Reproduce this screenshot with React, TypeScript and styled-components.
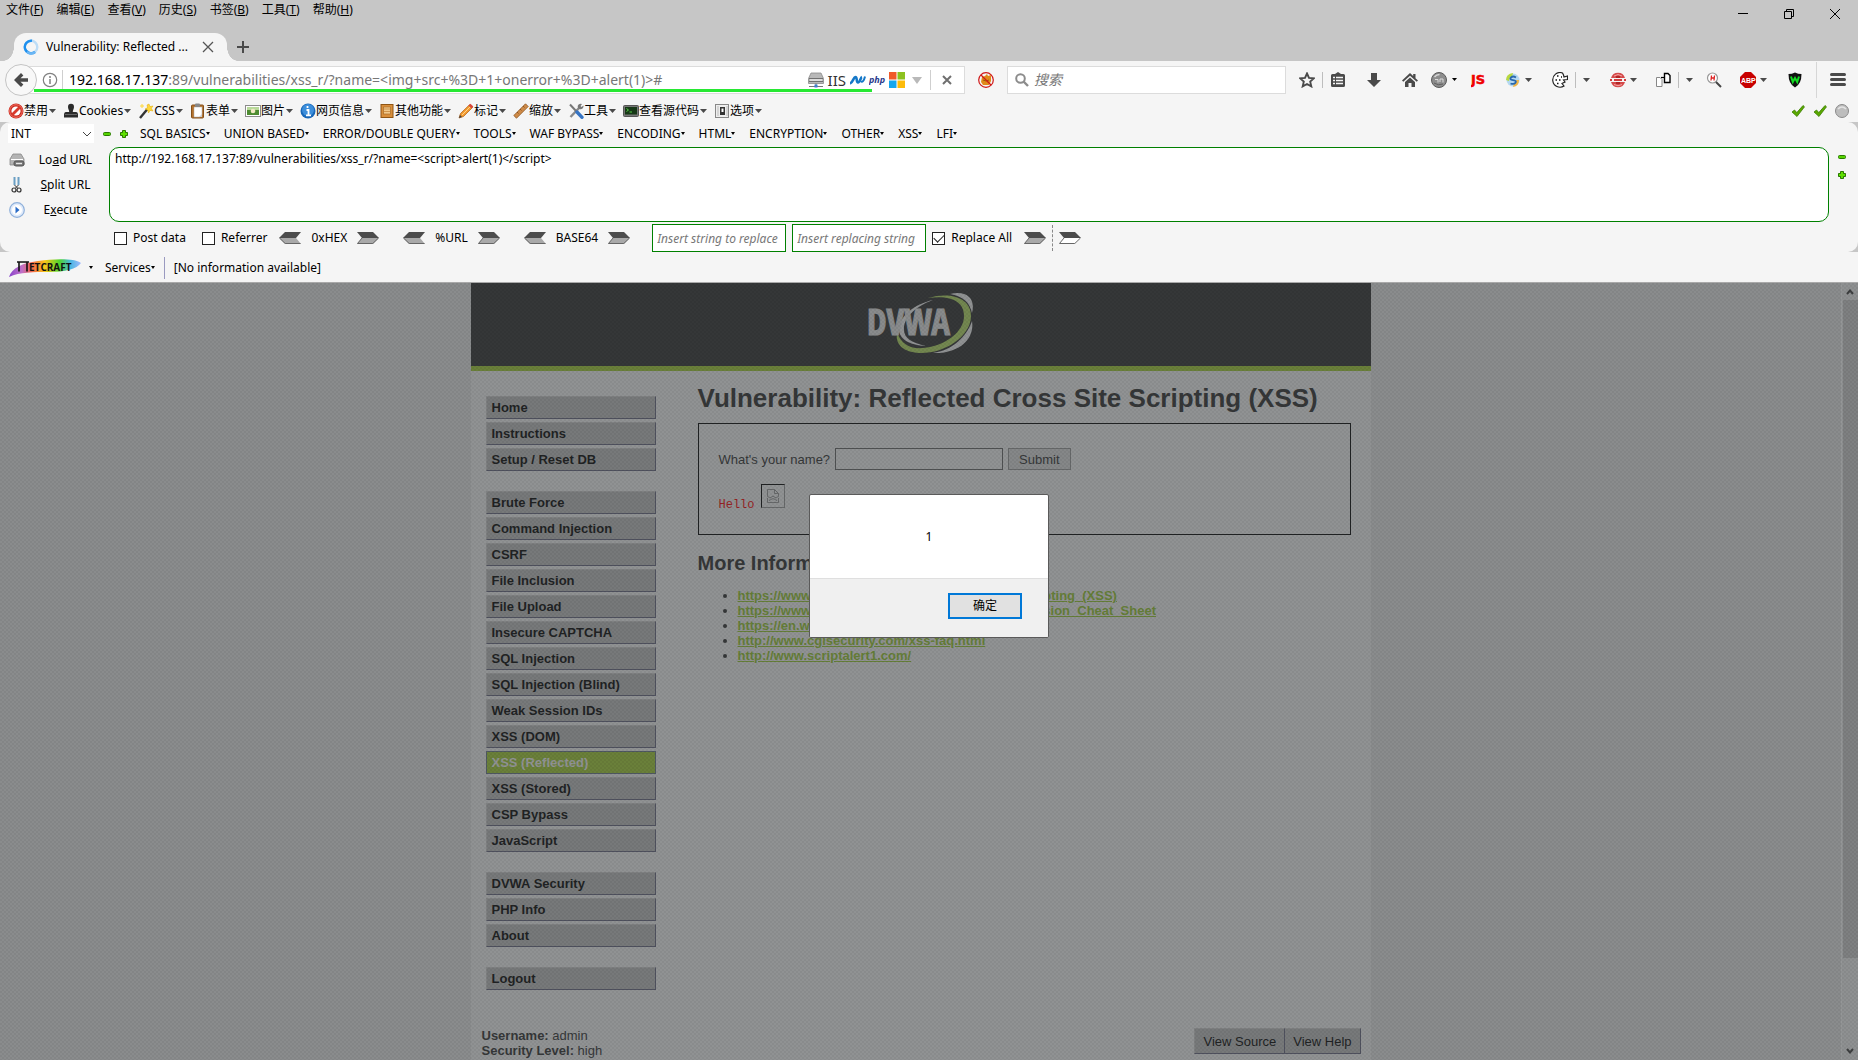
import React from 'react';
import styled, { createGlobalStyle, css } from 'styled-components';

const ui = `"Noto Sans", "Open Sans", "Noto Sans CJK SC", sans-serif`;
const page = `"Liberation Sans", Arial, "Noto Sans CJK SC", sans-serif`;

const Global = createGlobalStyle`
  * { box-sizing: border-box; }
  html, body { margin: 0; padding: 0; }
  body { font-family: ${ui}; font-size: 12px; line-height: 16px; color: #000; overflow: hidden; }
  button, input, select, textarea { font: inherit; color: inherit; margin: 0; padding: 0; border: 0; background: none; }
  svg { display: block; flex: none; }
`;

const Window = styled.div`
  display: flex;
  flex-direction: column;
  height: 100vh;
  background: #c6c6c6;
`;

/* ---------- title bar ---------- */

const TitleBar = styled.header`
  display: flex;
  justify-content: space-between;
  height: 33px;
`;
const MenuBar = styled.nav`
  display: flex;
  align-items: flex-start;
  gap: 1px;
  padding-top: 2px;
`;
const MenuItem = styled.button`
  padding: 0 6px;
  white-space: nowrap;
`;
const WindowControls = styled.div`
  display: flex;
`;
const WindowButton = styled.button`
  display: flex;
  width: 46px;
  height: 28px;
  align-items: center;
  justify-content: center;
`;

const TabStrip = styled.div`
  display: flex;
  height: 28px;
  padding-left: 14px;
`;
const Tab = styled.div`
  position: relative;
  display: flex;
  align-items: center;
  width: 213px;
  padding: 0 13px 0 9px;
  gap: 7px;
  background: #f5f5f5;
  border-radius: 12px 12px 0 0;
  &::before, &::after {
    content: "";
    position: absolute;
    bottom: 0;
    width: 11px;
    height: 14px;
  }
  &::before { left: -11px; background: radial-gradient(ellipse 11px 14px at 0 0, transparent 97%, #f5f5f5 100%); }
  &::after { right: -11px; background: radial-gradient(ellipse 11px 14px at 100% 0, transparent 97%, #f5f5f5 100%); }
`;
const TabTitle = styled.span`
  flex: 1;
  white-space: nowrap;
`;
const IconButton = styled.button`
  display: flex;
  align-items: center;
  justify-content: center;
  flex: none;
`;
const NewTab = styled(IconButton)`
  width: 32px;
`;

/* ---------- navigation toolbar ---------- */

const NavBar = styled.div`
  display: flex;
  align-items: center;
  height: 38px;
  padding: 0 12px 0 5px;
  background: #f5f5f5;
`;
const BackButton = styled(IconButton)`
  position: relative;
  z-index: 1;
  width: 32px;
  height: 32px;
  margin-right: -16px;
  border: 1px solid #c4c4c4;
  border-radius: 50%;
  background: #f8f8f8;
`;
const UrlBox = styled.div`
  position: relative;
  display: flex;
  align-items: center;
  flex: 1;
  height: 28px;
  padding: 0 12px 0 20px;
  border: 1px solid #dcdcdc;
  background: #fff;
  font-size: 14px;
  line-height: 20px;
`;
const LoadProgress = styled.div`
  position: absolute;
  left: 12px;
  bottom: 1px;
  width: 89%;
  height: 3px;
  background: #27e833;
`;
const Divider = styled.span<{ $h: number; $tone?: string }>`
  flex: none;
  width: 1px;
  height: ${p => p.$h}px;
  background: ${p => p.$tone || '#cfcfcf'};
`;
const HostLabel = styled.label`
  margin-left: 6px;
`;
const UrlInput = styled.input`
  flex: 1;
  min-width: 0;
  color: #777;
  outline: none;
`;
const UrlTools = styled.div`
  display: flex;
  align-items: center;
  gap: 3px;
`;
const ServerName = styled.span`
  padding: 0 1px;
  font-size: 15px;
  color: #333;
`;
const UrlTail = styled.div`
  display: flex;
  align-items: center;
  gap: 8px;
  padding-left: 4px;
`;
const BlockedButton = styled(IconButton)`
  width: 42px;
`;
const SearchBox = styled.label`
  display: flex;
  align-items: center;
  gap: 5px;
  width: 279px;
  height: 28px;
  padding: 0 7px;
  border: 1px solid #dcdcdc;
  background: #fff;
  font-size: 14px;
`;
const SearchInput = styled.input`
  flex: 1;
  min-width: 0;
  &::placeholder { color: #777; font-style: italic; opacity: 1; }
`;
const Tools = styled.div`
  display: flex;
  align-items: center;
  padding-left: 13px;
`;
const Tool = styled.div<{ $before: number }>`
  display: flex;
  align-items: center;
  margin-left: ${p => p.$before}px;
`;

/* ---------- developer toolbar ---------- */

const DevBar = styled.div`
  display: flex;
  align-items: center;
  height: 23px;
  padding: 0 9px 0 8px;
  gap: 7px;
  background: #f5f5f5;
`;
const DevButton = styled.button`
  display: flex;
  align-items: center;
  white-space: nowrap;
  line-height: 20px;
  & > svg:last-child { margin-left: 1px; }
`;
const DevStatus = styled.div`
  display: flex;
  gap: 8px;
  margin-left: auto;
`;

/* ---------- hackbar ---------- */

const HackBar = styled.section`
  display: flex;
  flex-direction: column;
  height: 130px;
  border-radius: 10px;
  background: #f5f5f5;
`;
const HackMenu = styled.div`
  display: flex;
  align-items: center;
  height: 23px;
  margin-bottom: 2px;
  padding-left: 8px;
  gap: 12px;
`;
const HackMenuList = styled.div`
  display: flex;
  align-items: center;
  gap: 14px;
`;
const HackSelectBox = styled.div`
  display: grid;
  align-items: center;
  width: 86px;
  height: 19px;
  margin-right: -3px;
  background: #fff;
  & > * { grid-area: 1 / 1; }
  & > svg { justify-self: end; margin-right: 2px; pointer-events: none; }
`;
const HackSelect = styled.select`
  width: 100%;
  padding-left: 3px;
  appearance: none;
`;
const HackMenuButton = styled.button`
  display: flex;
  align-items: center;
  white-space: nowrap;
`;
const PlusMinus = styled.div`
  display: flex;
  gap: 9px;
`;
const HackBody = styled.div`
  display: flex;
  height: 75px;
`;
const HackActions = styled.div`
  display: flex;
  flex-direction: column;
  width: 109px;
  padding: 0 3px 0 9px;
`;
const HackAction = styled.button`
  display: flex;
  align-items: center;
  flex: 1;
  & > span { flex: 1; text-align: center; }
`;
const HackText = styled.textarea`
  flex: 1;
  padding: 3px 5px;
  border: 1px solid #008000;
  border-radius: 10px;
  background: #fff;
  resize: none;
  outline: none;
`;
const HackSide = styled.div`
  display: flex;
  flex-direction: column;
  align-items: center;
  width: 29px;
  padding: 6px 3px 0 0;
  gap: 10px;
`;
const HackOptions = styled.div`
  display: flex;
  align-items: center;
  height: 30px;
  padding: 2px 0 0 114px;
`;
const Check = styled.label<{ $gap: number }>`
  display: flex;
  align-items: center;
  gap: 6px;
  margin-right: ${p => p.$gap}px;
  white-space: nowrap;
`;
const CheckInput = styled.input`
  appearance: none;
  display: grid;
  place-items: center;
  width: 13px;
  height: 13px;
  border: 1px solid #222;
  background: #fff;
  &:checked::before {
    content: "";
    width: 9px;
    height: 5px;
    margin-top: -3px;
    border: solid #222;
    border-width: 0 0 1px 1px;
    transform: rotate(-45deg);
  }
`;
const Codecs = styled.div`
  display: flex;
  gap: 24px;
  margin-right: 22px;
`;
const Codec = styled.div`
  display: flex;
  align-items: center;
  gap: 10px;
`;
const ReplaceInput = styled.input`
  width: 134px;
  height: 28px;
  margin-right: 6px;
  padding: 0 4px;
  border: 1px solid #008000;
  background: #fff;
  &::placeholder { color: #777; font-style: italic; opacity: 1; }
`;
const ReplaceRun = styled.div`
  display: flex;
  align-items: center;
  gap: 6px;
`;
const Dashed = styled.span`
  width: 1px;
  height: 26px;
  border-left: 1px dashed #888;
`;

/* ---------- netcraft ---------- */

const NetcraftBar = styled.div`
  display: flex;
  align-items: center;
  height: 31px;
  padding: 1px 0 0 8px;
  gap: 9px;
  border-bottom: 1px solid #a9a9a9;
  background: #f5f5f5;
`;
const NetcraftButton = styled(HackMenuButton)`
  gap: 5px;
`;
const Services = styled(HackMenuButton)`
  margin-left: 3px;
`;

/* ---------- web page ---------- */

const Viewport = styled.div`
  position: relative;
  display: flex;
  flex: 1;
  min-height: 0;
  overflow: hidden;
`;
const Page = styled.div`
  flex: 1;
  background: #e7e7e7;
  font-family: ${page};
  font-size: 13px;
  line-height: 15px;
  color: #2f2f2f;
`;
const Container = styled.div`
  width: 900px;
  min-height: 100%;
  margin: 0 auto;
  background: #f4f4f4;
`;
const PageHeader = styled.div`
  display: flex;
  justify-content: center;
  height: 88px;
  padding: 8px 0 0;
  border-bottom: 5px solid #a1cc33;
  background: #2f2f2f;
`;
const Columns = styled.div`
  display: grid;
  grid-template-columns: 170px 1fr;
  gap: 42px;
  padding: 0 20px 0 15px;
`;
const SideNav = styled.nav`
  padding-top: 25px;
`;
const NavGroup = styled.ul`
  display: grid;
  gap: 3px;
  margin: 0 0 20px;
  padding: 0;
  list-style: none;
`;
const NavLink = styled.a<{ $active?: boolean }>`
  display: block;
  height: 23px;
  padding: 3px 5px;
  border: 1px solid #d0d0d0;
  border-right-color: #666680;
  border-bottom-color: #666680;
  background: #bebebe;
  color: #000;
  font-weight: bold;
  text-decoration: none;
  ${p => p.$active && css`
    border-color: #667788;
    background: #a1cc33;
    color: #f4f4f4;
  `}
`;
const Main = styled.main`
  padding-top: 12px;
`;
const Title = styled.h1`
  margin: 0 0 10px;
  font-size: 26px;
  line-height: 30px;
  white-space: nowrap;
`;
const Vulnerable = styled.div`
  padding: 24px 20px 26px;
  border: 1px solid #000;
`;
const NameForm = styled.form`
  display: flex;
  align-items: center;
  gap: 5px;
`;
const NameInput = styled.input`
  width: 168px;
  height: 22px;
  border: 1px solid #666;
  background: #f4f4f4;
`;
const Submit = styled.button`
  height: 22px;
  padding: 0 10px;
  border: 1px solid #999;
  background: #dcdcdc;
`;
const Greeting = styled.div`
  display: flex;
  gap: 6px;
  margin-top: 14px;
  color: #f00;
  font-family: "Liberation Mono", monospace;
  font-size: 12px;
  line-height: 42px;
  height: 24px;
`;
const BrokenImage = styled.span`
  display: grid;
  place-items: center;
  width: 24px;
  height: 24px;
  border: 1px solid #999;
  border-top-color: #000;
  border-left-color: #000;
`;
const Subtitle = styled.h2`
  margin: 16px 0 13px;
  font-size: 20px;
  line-height: 24px;
`;
const Links = styled.ul`
  margin: 0;
  padding: 0 0 0 40px;
`;
const MoreLink = styled.a`
  color: #96c82e;
  font-weight: bold;
`;
const Footer = styled.div`
  display: flex;
  justify-content: space-between;
  padding: 18px 10px 0 11px;
`;
const SourceButtons = styled.div`
  display: flex;
`;
const SourceButton = styled.button`
  height: 26px;
  padding: 0 8px;
  border: 1px solid #d0d0d0;
  border-right-color: #666680;
  border-bottom-color: #666680;
  background: #bebebe;
  color: #000;
  & + & { border-left-width: 0; }
`;

const Scrollbar = styled.div`
  display: flex;
  flex-direction: column;
  align-items: center;
  width: 17px;
  padding: 6px 0;
  border-left: 1px solid #fff;
  background: #f0f0f0;
`;
const Thumb = styled.div`
  width: 15px;
  margin: 5px 0 auto;
  height: 86%;
  background: #cdcdcd;
`;

const Shade = styled.div`
  position: absolute;
  inset: 0;
  display: flex;
  justify-content: center;
  align-items: flex-start;
  padding-top: 211px;
  background:
    radial-gradient(circle at 1px 1px, rgba(0, 0, 0, 0.05) 1px, transparent 1px) 0 0 / 4px 4px,
    radial-gradient(circle at 1px 1px, rgba(0, 0, 0, 0.05) 1px, transparent 1px) 2px 2px / 4px 4px,
    rgba(60, 63, 64, 0.54);
`;
const Dialog = styled.div`
  width: 240px;
  border: 1px solid #5a5a5a;
  border-radius: 2px;
  background: #fff;
  overflow: hidden;
`;
const DialogText = styled.p`
  margin: 0;
  padding: 34px 0 33px;
  text-align: center;
`;
const DialogActions = styled.div`
  display: flex;
  justify-content: flex-end;
  padding: 14px 26px 18px;
  border-top: 1px solid #dfdfdf;
  background: #f0f0f0;
`;
const OkButton = styled.button`
  width: 74px;
  height: 26px;
  border: 2px solid #0078d7;
  background: #e1e1e1;
`;

/* ---------- drawings ---------- */

const Icon = ({ children, w = 16, h = 16 }: { children: React.ReactNode; w?: number; h?: number }) => (
  <svg width={w} height={h} viewBox={`0 0 ${w} ${h}`} fill="none" aria-hidden="true">{children}</svg>
);

const Caret = () => <Icon w={7} h={4}><path d="M0 0h7L3.500 4z" fill="#4a4a4a" /></Icon>;
const SmallCaret = () => <Icon w={4} h={3}><path d="M0 0h4L2 3z" fill="#000" /></Icon>;

const Minus = () => <Icon w={8} h={8}><rect x=".5" y="2.500" width="7" height="3" rx="1" fill="#55d400" stroke="#2a7a00" /></Icon>;
const Plus = () => (
  <Icon w={8} h={8}>
    <path d="M2.500.5h3v2h2v3h-2v2h-3v-2h-2v-3h2z" fill="#2a7a00" stroke="#2a7a00" strokeLinejoin="round" />
    <path d="M4 1v6M1 4h6" stroke="#5fe000" strokeWidth="2" />
  </Icon>
);

const ArrowRight = ({ hollow }: { hollow?: boolean }) => (
  <Icon w={22} h={12}>
    <path d="M0 0h16l6 6H5z" fill="#4c4c4c" />
    <path d="M5 6h17l-6 6H0z" fill={hollow ? '#fff' : '#a9a9a9'} />
    <path d="M5 6L.5 11.500h15.300L21.500 6" stroke="#666" />
  </Icon>
);
const ArrowLeft = () => (
  <Icon w={22} h={12}>
    <path d="M22 0H6L0 6h17z" fill="#4c4c4c" />
    <path d="M17 6H0l6 6h16z" fill="#a9a9a9" />
    <path d="M21.500 11.500H6.200L.5 6" stroke="#666" />
  </Icon>
);

const CheckMark = () => (
  <Icon w={14} h={14}><path d="M1 8l2.500-2 2.300 2.600L12 1.500l1.500 1.300L6 12.500z" fill="#5aa800" stroke="#3b7d00" strokeWidth=".8" /></Icon>
);

const devIcons: Record<string, React.ReactNode> = {
  ban: <><circle cx="8" cy="8" r="7.500" fill="#c9281c" /><circle cx="8" cy="8" r="6.300" stroke="#f4776a" /><circle cx="8" cy="8" r="4.600" fill="#fff" /><path d="M4 12l8-8" stroke="#d83a2c" strokeWidth="2.800" /></>,
  person: <><path d="M5 4a3 3.300 0 016 0c0 2-1.200 2.800-1.200 5H13q2 0 2 3v2.500H1V12q0-3 2-3h3.200C6.200 6.800 5 6 5 4z" fill="#2b2b2b" /><path d="M2 11.500h12" stroke="#666" /></>,
  wand: <><path d="M2 15L9.500 6" stroke="#333" strokeWidth="2.400" /><path d="M9 6.500l1.500-1.800" stroke="#ddd" strokeWidth="2.400" /><path d="M11 1l1 2.600L15 3l-1.700 2.300L15 8l-3-.6L10.500 10l-.7-3L7 6l2.600-1.300L9 2z" fill="#ffd83a" stroke="#e0a800" strokeWidth=".5" /><path d="M4 1v4M2 3h4" stroke="#ffd83a" /></>,
  form: <><rect x="1.500" y="2" width="12" height="13" rx="1" fill="#b5732e" stroke="#85501a" /><path d="M4 4h8v8l-2 2H4z" fill="#fff" stroke="#aaa" strokeWidth=".5" /><rect x="5" y=".5" width="5" height="3.500" rx="1" fill="#888" /><path d="M9 14l3-3v3z" fill="#ccc" /></>,
  image: <><rect x=".5" y="2.500" width="15" height="11" fill="#fff" stroke="#8b8b8b" /><rect x="2" y="4" width="12" height="8" fill="#4d8b31" /><path d="M2 4h12v3H2z" fill="#b8d99a" /><circle cx="8" cy="8" r="2.300" fill="#f2e9c4" /></>,
  info: <><circle cx="8" cy="8" r="7.500" fill="#1767b8" /><circle cx="8" cy="7" r="6" fill="#3c8edb" /><path d="M6.500 7h2v5M6 12.300h5M7.500 3v2" stroke="#fff" strokeWidth="1.800" /></>,
  box: <><rect x="2" y="1.500" width="12" height="13" fill="#d98f3c" stroke="#8f5514" /><rect x="4.500" y="4" width="7" height="7" fill="#f1c98c" stroke="#a96b25" strokeWidth=".7" /><path d="M5 6h6M5 8.500h6" stroke="#c07c30" strokeWidth=".7" /></>,
  pencil: <><path d="M1 15l1.500-4.500 9-8.800 3 2.800L5.500 13.500z" fill="#f29a2e" stroke="#ad5a10" strokeWidth=".7" /><path d="M10.500 2.500L12.500.7l2.800 2.700-1.600 2z" fill="#d9473b" /><path d="M1 15l1-3 2 2z" fill="#444" /><path d="M4 12l8-8" stroke="#ffd28a" /></>,
  ruler: <><path d="M.8 12.500L12.500.8 15.200 3.500 3.500 15.200z" fill="#cf8b48" stroke="#8d5521" strokeWidth=".8" /><path d="M4 9l1.500 1.500M7 6l1.500 1.500M10 3l1.500 1.500" stroke="#7d4818" strokeWidth=".8" /></>,
  tools: <><path d="M2.500 14L12 4" stroke="#8a8a8a" strokeWidth="2.400" /><path d="M10 5a3 3 0 014-4l-1.500 2 1 1L15.500 2.500A3 3 0 0111.500 6z" fill="#777" /><path d="M2 1.500L9 9" stroke="#777" strokeWidth="2" /><path d="M9 9l5 5.300" stroke="#3674c4" strokeWidth="3.400" strokeLinecap="round" /></>,
  terminal: <><rect x=".5" y="2.500" width="15" height="11" rx="1" fill="#777" stroke="#555" /><rect x="2" y="4" width="12" height="7.500" fill="#173817" /><path d="M3.500 5.500l2 1.500-2 1.500M6.500 9H9" stroke="#55cc44" /></>,
  options: <><rect x="1.500" y="1.500" width="13" height="13" fill="#eee" stroke="#888" /><rect x="6" y="4" width="5" height="8" fill="#333" /><path d="M7.500 5.500h2V9h-2z" fill="#fff" /><path d="M4 3v10M13 3v10" stroke="#bbb" /></>,
};

const devMenu: [string, string][] = [
  ['ban', '禁用'], ['person', 'Cookies'], ['wand', 'CSS'], ['form', '表单'], ['image', '图片'], ['info', '网页信息'],
  ['box', '其他功能'], ['pencil', '标记'], ['ruler', '缩放'], ['tools', '工具'], ['terminal', '查看源代码'], ['options', '选项'],
];

const menus = [['文件', 'F'], ['编辑', 'E'], ['查看', 'V'], ['历史', 'S'], ['书签', 'B'], ['工具', 'T'], ['帮助', 'H']];

const hackMenus = ['SQL BASICS', 'UNION BASED', 'ERROR/DOUBLE QUERY', 'TOOLS', 'WAF BYPASS', 'ENCODING', 'HTML', 'ENCRYPTION', 'OTHER', 'XSS', 'LFI'];

const navGroups = [
  ['Home', 'Instructions', 'Setup / Reset DB'],
  ['Brute Force', 'Command Injection', 'CSRF', 'File Inclusion', 'File Upload', 'Insecure CAPTCHA', 'SQL Injection', 'SQL Injection (Blind)',
    'Weak Session IDs', 'XSS (DOM)', 'XSS (Reflected)', 'XSS (Stored)', 'CSP Bypass', 'JavaScript'],
  ['DVWA Security', 'PHP Info', 'About'],
  ['Logout'],
];

const links = [
  'https://www.owasp.org/index.php/Cross-site_Scripting_(XSS)',
  'https://www.owasp.org/index.php/XSS_Filter_Evasion_Cheat_Sheet',
  'https://en.wikipedia.org/wiki/Cross-site_scripting',
  'http://www.cgisecurity.com/xss-faq.html',
  'http://www.scriptalert1.com/',
];

const ServerIcon = () => (
  <Icon>
    <path d="M3 1h10l2.500 5.500v5H.5v-5z" fill="#b8b8b8" stroke="#8a8a8a" strokeWidth=".8" />
    <path d="M1 6.500h14M1 9.500h14" stroke="#6f6f6f" /><path d="M2 8h12" stroke="#fff" />
    <path d="M8 11.500V14M1 14.500h14" stroke="#777" /><rect x="6.500" y="12.500" width="3" height="3" fill="#3f7fd0" />
  </Icon>
);
const WindowsIcon = () => (
  <Icon>
    <path d="M0 0h7.500v7.500H0z" fill="#f0592a" /><path d="M8.500 0H16v7.500H8.500z" fill="#8cc11f" />
    <path d="M0 8.500h7.500V16H0z" fill="#15a6ee" /><path d="M8.500 8.500H16V16H8.500z" fill="#fdbb0a" />
  </Icon>
);

const DvwaLogo = () => (
  <svg width="110" height="66" viewBox="0 0 110 66" role="img" aria-label="DVWA">
    <path d="M84 3c16-4 26 4 22 19-2-10-9-17-22-19z" fill="#f4f4f4" />
    <path d="M106 30c3 18-13 33-39 32 19-3 33-15 39-32z" fill="#f4f4f4" />
    <path d="M62 7C86 0 106 8 105 26 104 46 78 63 53 62 38 61 29 54 31 42c5 11 12 16 26 15 22-2 41-16 41-32C98 11 86 4 62 7z" fill="#b5dd62" />
    <path d="M67 9C50 15 37 27 38 39c0 8 8 13 22 16-17-1-27-7-27-17C33 26 48 13 67 9z" fill="#f4f4f4" />
    <text x="1" y="44" fontFamily="'Liberation Sans Narrow', 'Open Sans Condensed', 'Liberation Sans', sans-serif" fontWeight="bold" fontSize="35" fill="#e4e4e4" stroke="#e4e4e4" strokeWidth="1">DVWA</text>
  </svg>
);

const NetcraftLogo = () => (
  <svg width="76" height="20" viewBox="0 0 76 20" role="img" aria-label="Netcraft">
    <defs>
      <linearGradient id="rainbow">
        <stop offset="0" stopColor="#8844cc" /><stop offset=".18" stopColor="#c070c8" /><stop offset=".32" stopColor="#f2664a" />
        <stop offset=".5" stopColor="#f8c818" /><stop offset=".7" stopColor="#4fd52c" /><stop offset=".85" stopColor="#48b8e0" /><stop offset="1" stopColor="#9fb8ff" />
      </linearGradient>
    </defs>
    <path d="M1 19C4 10 14 5 30 3 46 1 66 0 73 5c-4 6-16 9-32 9C26 14 12 14 1 19z" fill="url(#rainbow)" />
    <path d="M9 4h12M11 4v9.500M19 4v9.500" stroke="#111" strokeWidth="1.600" />
    <text x="21" y="13" fontFamily="'Open Sans', sans-serif" fontWeight="bold" fontSize="10" fill="#111">ETCRAFT</text>
  </svg>
);

const Navigation = () => (
  <NavBar>
    <BackButton aria-label="Back">
      <Icon><path d="M1 8l7-7 2.400 2.400L7.500 6.300H15v3.400H7.500l2.900 2.900L8 15z" fill="#4a4a4a" /></Icon>
    </BackButton>
    <UrlBox>
      <IconButton aria-label="Site information">
        <Icon><circle cx="8" cy="8" r="6.700" stroke="#808080" strokeWidth="1.200" /><path d="M8 7v5M8 4v2" stroke="#808080" strokeWidth="1.500" /></Icon>
      </IconButton>
      <Tool $before={4}><Divider $h={20} /></Tool>
      <HostLabel htmlFor="url">192.168.17.137</HostLabel>
      <UrlInput id="url" defaultValue=":89/vulnerabilities/xss_r/?name=<img+src+%3D+1+onerror+%3D+alert(1)>#" />
      <UrlTools>
        <ServerIcon />
        <ServerName>IIS</ServerName>
        <Icon><path d="M0 11.500c3-1 3.500-6.500 5.500-6.500s.5 5.500 2.500 5.500S10.500 5.500 12 5" stroke="#1578c8" strokeWidth="2.600" /><path d="M11 9c1 2 3 0 4-4.500" stroke="#1578c8" strokeWidth="2" /></Icon>
        <svg width="17" height="16" viewBox="0 0 17 16"><text x="0" y="11" fontFamily="'Open Sans', sans-serif" fontStyle="italic" fontWeight="bold" fontSize="9" fill="#2a3a8c">php</text></svg>
        <WindowsIcon />
        <UrlTail>
          <Icon w={10} h={7}><path d="M0 0h10L5 7z" fill="#b9b9b9" /></Icon>
          <Divider $h={20} />
        </UrlTail>
        <Tool $before={8}>
          <IconButton aria-label="Stop">
            <Icon w={10} h={10}><path d="M1 1l8 8M9 1L1 9" stroke="#6f6f6f" strokeWidth="2" /></Icon>
          </IconButton>
        </Tool>
      </UrlTools>
      <LoadProgress />
    </UrlBox>
    <BlockedButton aria-label="Blocked">
      <Icon><path d="M4 5l3-1 2-2 1 2 3-1v6l-2 4H5L3 10z" fill="#e08a1a" /><path d="M5 8l3 1 3-1" stroke="#9c5a08" /><circle cx="8" cy="8" r="7.300" stroke="#d01818" strokeWidth="1.200" /><path d="M3 3l10 10" stroke="#d01818" strokeWidth="1.200" /></Icon>
    </BlockedButton>
    <SearchBox>
      <Icon w={14} h={14}><circle cx="5.500" cy="5.500" r="4.300" stroke="#8c8c8c" strokeWidth="2" /><path d="M8.500 8.500L13 13" stroke="#8c8c8c" strokeWidth="2.400" /></Icon>
      <SearchInput placeholder="搜索" aria-label="搜索" />
    </SearchBox>
    <Tools>
      <Icon><path d="M8 1.500l2 4.400 4.800.5-3.600 3.200 1.100 4.800L8 12l-4.300 2.400 1.100-4.800L1.200 6.400 6 5.900z" stroke="#4a4a4a" strokeWidth="1.900" /></Icon>
      <Tool $before={7}><Divider $h={16} $tone="#bdbdbd" /></Tool>
      <Tool $before={7}><Icon><path d="M5 2l3-2 3 2h2.500Q15 2 15 3.500v10q0 1.500-1.500 1.500h-11Q1 15 1 13.500v-10Q1 2 2.500 2z" fill="#4a4a4a" /><path d="M3 5.500h2M3 8.500h2M3 11.500h2M6 5.500h7M6 8.500h7M6 11.500h7" stroke="#f5f5f5" strokeWidth="1.500" /></Icon></Tool>
      <Tool $before={20}><Icon><path d="M5 1h6v7h4l-7 7-7-7h4z" fill="#4a4a4a" /></Icon></Tool>
      <Tool $before={20}><Icon><path d="M8 1L0 8.500 1.300 9.800 8 3.700l6.700 6.100L16 8.500l-2.500-2.300V2h-2.300v2z" fill="#4a4a4a" /><path d="M3 10l5-4.600L13 10v5H9.500v-4h-3v4H3z" fill="#4a4a4a" /></Icon></Tool>
      <Tool $before={13}><Icon><circle cx="8" cy="8" r="7.500" fill="#8d8d8d" stroke="#5a5a5a" /><path d="M3.500 5q2-2.500 5-2.500" stroke="#d8d8d8" strokeWidth="1.300" /><path d="M4 7.500h3v3M9 10V7h3v3.500" stroke="#dcdcdc" /><path d="M3 11q4 3 9 1" stroke="#606060" /></Icon></Tool>
      <Tool $before={4}><Icon w={7} h={4}><path d="M1 0h5L3.500 3z" fill="#000" /></Icon></Tool>
      <Tool $before={13}><svg width="16" height="16" viewBox="0 0 16 16"><text x="0" y="12" fontFamily="'DejaVu Sans', sans-serif" fontWeight="bold" fontSize="13" fill="#f00000" stroke="#f00000" strokeWidth=".5">JS</text></svg></Tool>
      <Tool $before={18}><Icon><circle cx="8" cy="8" r="6.500" fill="#b4d8f0" /><path d="M1 8Q1 2 8 1L7 5Q4 5 4 9z" fill="#b8d840" /><path d="M14 8q0 6-6 7l1-4q3 0 2-3z" fill="#f3b544" /><path d="M11 5.500Q8 3.500 6 5.500t2 2.700 2.500 2.600-5 .7" stroke="#2968ae" strokeWidth="1.800" /></Icon></Tool>
      <Tool $before={4}><Caret /></Tool>
      <Tool $before={20}><Icon><path d="M10.500 1A7.300 7.300 0 1012 14l-2-2.500L13 10l-1.500-2 4-.5V4L12 5l-.5-2z" fill="#fff" stroke="#222" strokeWidth="1.200" /><path d="M5 4h1.500M9 5h1M3.500 8H5M7 8h1.500M5 11.500h1.500" stroke="#111" strokeWidth="1.600" /></Icon></Tool>
      <Tool $before={7}><Divider $h={16} $tone="#bdbdbd" /></Tool>
      <Tool $before={7}><Caret /></Tool>
      <Tool $before={20}><Icon><path d="M1 6a7.300 7.300 0 0114 0zM1 10a7.300 7.300 0 0014 0z" fill="#d44a4a" /><path d="M4 4q4-3 8 0M4 12.500q4 2.500 8 0" stroke="#f3a5a5" /><path d="M0 8h2M4 8h8M14 8h2" stroke="#d23c3c" strokeWidth="2" /><path d="M6 5h4M6 11h4" stroke="#a81818" strokeWidth="1.400" /></Icon></Tool>
      <Tool $before={4}><Caret /></Tool>
      <Tool $before={18}><Icon><path d="M1.500 5.500H5l2 2v7H1.500z" fill="#fff" stroke="#888" /><path d="M9.500 1.500h3.500l2 2v7H9.500z" fill="#fff" stroke="#000" strokeWidth="1.400" /><path d="M6 5.500h3.500" stroke="#000" strokeWidth="1.200" /></Icon></Tool>
      <Tool $before={7}><Divider $h={16} $tone="#bdbdbd" /></Tool>
      <Tool $before={7}><Caret /></Tool>
      <Tool $before={13}><Icon><circle cx="6.500" cy="6" r="5" fill="#fff" stroke="#999" strokeWidth="1.200" /><path d="M5.500 3.500L5 8.500M8.500 3.500L8 8.500M5 6h3.500" stroke="#d22" strokeWidth="1.300" /><path d="M10 10l5 5" stroke="#444" strokeWidth="2" /></Icon></Tool>
      <Tool $before={18}>
        <svg width="16" height="16" viewBox="0 0 16 16"><path d="M5 0h6l5 5v6l-5 5H5l-5-5V5z" fill="#c80000" /><text x="1" y="11" fontFamily="'Liberation Sans', sans-serif" fontWeight="bold" fontSize="7" fill="#fff">ABP</text></svg>
      </Tool>
      <Tool $before={4}><Caret /></Tool>
      <Tool $before={20}><Icon><path d="M8 .5q3 1.500 6.500 1.500 0 10-6.500 13.500Q1.500 12 1.500 2 5 2 8 .5z" fill="#111" /><path d="M4 4.500L5.800 10 8 6l2.200 4L12 4.500" stroke="#12dd22" strokeWidth="2" /></Icon></Tool>
      <Tool $before={13}><Divider $h={36} $tone="#d6d6d6" /></Tool>
      <Tool $before={13}><Icon><path d="M1.500 2.500h13M1.500 7.500h13M1.500 12.500h13" stroke="#4a4a4a" strokeWidth="3" strokeLinecap="round" /></Icon></Tool>
    </Tools>
  </NavBar>
);

export default function App() {
  return (
    <Window>
      <Global />
      <TitleBar>
        <MenuBar>
          {menus.map(([name, key]) => <MenuItem key={name}>{name}(<u>{key}</u>)</MenuItem>)}
        </MenuBar>
        <WindowControls>
          <WindowButton aria-label="Minimize"><Icon w={12} h={12}><path d="M1 5.500h10" stroke="#000" /></Icon></WindowButton>
          <WindowButton aria-label="Restore"><Icon w={12} h={12}><path d="M1.500 3.500h7v7h-7zM3.500 3.500v-2h7v7h-2" stroke="#000" /></Icon></WindowButton>
          <WindowButton aria-label="Close"><Icon w={12} h={12}><path d="M1 1l10 10M11 1L1 11" stroke="#000" /></Icon></WindowButton>
        </WindowControls>
      </TitleBar>
      <TabStrip>
        <Tab>
          <Icon><circle cx="8" cy="8" r="6.300" stroke="#bcdcf6" strokeWidth="2.400" /><path d="M12 13A6.300 6.300 0 119 1.800" stroke="#1e90ee" strokeWidth="2.400" /><path d="M12 13A6.300 6.300 0 014 12.900" stroke="#6ab6f4" strokeWidth="2.400" /></Icon>
          <TabTitle>Vulnerability: Reflected ...</TabTitle>
          <IconButton aria-label="Close tab"><Icon w={12} h={12}><path d="M1 1l10 10M11 1L1 11" stroke="#555" strokeWidth="1.300" /></Icon></IconButton>
        </Tab>
        <NewTab aria-label="New tab"><Icon w={12} h={12}><path d="M6 0v12M0 6h12" stroke="#4a4a4a" strokeWidth="2" /></Icon></NewTab>
      </TabStrip>
      <Navigation />
      <DevBar>
        {devMenu.map(([icon, name]) => (
          <DevButton key={name}><Icon>{devIcons[icon]}</Icon>{name}<Caret /></DevButton>
        ))}
        <DevStatus>
          <CheckMark />
          <CheckMark />
          <Icon w={14} h={14}><circle cx="7" cy="7" r="6.500" fill="#bdbdbd" stroke="#8a8a8a" /><path d="M3 5q4-4 8 0" stroke="#e4e4e4" strokeWidth="1.500" /></Icon>
        </DevStatus>
      </DevBar>
      <HackBar>
        <HackMenu>
          <HackSelectBox>
            <HackSelect aria-label="Type"><option>INT</option></HackSelect>
            <Icon w={10} h={10}><path d="M1 3l4 4 4-4" stroke="#444" /></Icon>
          </HackSelectBox>
          <PlusMinus><Minus /><Plus /></PlusMinus>
          <HackMenuList>
            {hackMenus.map(name => <HackMenuButton key={name}>{name}<SmallCaret /></HackMenuButton>)}
          </HackMenuList>
        </HackMenu>
        <HackBody>
          <HackActions>
            <HackAction>
              <Icon><path d="M4 2h8l3 5v6H1V7z" fill="#b4b4b4" stroke="#888" strokeWidth=".8" /><path d="M2 7.500h12" stroke="#fff" /><rect x="5" y="9" width="10" height="5" rx="2" fill="#777" stroke="#555" /><path d="M7 11.500h6" stroke="#e8e8e8" strokeWidth="1.400" /></Icon>
              <span>Lo<u>a</u>d URL</span>
            </HackAction>
            <HackAction>
              <Icon><path d="M5.500 0v8M9.500 0v8" stroke="#6b9fc4" strokeWidth="2" /><path d="M5.500 8l3 3M9.500 8l-3 3" stroke="#333" /><circle cx="5" cy="13" r="2" stroke="#333" strokeWidth="1.200" /><circle cx="10" cy="13" r="2" stroke="#333" strokeWidth="1.200" /></Icon>
              <span><u>S</u>plit URL</span>
            </HackAction>
            <HackAction>
              <Icon><circle cx="8" cy="8" r="7.300" fill="#dfeafa" stroke="#8fb0da" strokeWidth="1.200" /><circle cx="8" cy="8" r="5" fill="#fff" /><path d="M6.500 4.500L10.500 8l-4 3.500z" fill="#2a6cc8" /></Icon>
              <span>E<u>x</u>ecute</span>
            </HackAction>
          </HackActions>
          <HackText aria-label="URL" spellCheck={false} defaultValue="http://192.168.17.137:89/vulnerabilities/xss_r/?name=<script>alert(1)</script>" />
          <HackSide><Minus /><Plus /></HackSide>
        </HackBody>
        <HackOptions>
          <Check $gap={16}><CheckInput type="checkbox" />Post data</Check>
          <Check $gap={12}><CheckInput type="checkbox" />Referrer</Check>
          <Codecs>
            {['0xHEX', '%URL', 'BASE64'].map(name => (
              <Codec key={name}><ArrowLeft />{name}<ArrowRight /></Codec>
            ))}
          </Codecs>
          <ReplaceInput placeholder="Insert string to replace" aria-label="Insert string to replace" />
          <ReplaceInput placeholder="Insert replacing string" aria-label="Insert replacing string" />
          <Check $gap={12}><CheckInput type="checkbox" defaultChecked />Replace All</Check>
          <ReplaceRun><ArrowRight /><Dashed /><ArrowRight hollow /></ReplaceRun>
        </HackOptions>
      </HackBar>
      <NetcraftBar>
        <NetcraftButton aria-label="Netcraft"><NetcraftLogo /><SmallCaret /></NetcraftButton>
        <Services>Services<SmallCaret /></Services>
        <Divider $h={22} $tone="#9a9ac0" />
        <span>[No information available]</span>
      </NetcraftBar>
      <Viewport>
        <Page>
          <Container>
            <PageHeader><DvwaLogo /></PageHeader>
            <Columns>
              <SideNav>
                {navGroups.map(group => (
                  <NavGroup key={group[0]}>
                    {group.map(name => (
                      <li key={name}><NavLink href="#" $active={name === 'XSS (Reflected)'}>{name}</NavLink></li>
                    ))}
                  </NavGroup>
                ))}
              </SideNav>
              <Main>
                <Title>Vulnerability: Reflected Cross Site Scripting (XSS)</Title>
                <Vulnerable>
                  <NameForm>
                    <label htmlFor="name">What's your name?</label>
                    <NameInput id="name" />
                    <Submit type="button">Submit</Submit>
                  </NameForm>
                  <Greeting>
                    Hello
                    <BrokenImage>
                      <Icon><path d="M2.500 8V1.500h7l4 4V8M9.500 1.500v4h4M2.500 10v4.500h11V10M2 8l3 2 3-2 3 2 3-2M4 12.500l4-2 4 2" stroke="#999" /></Icon>
                    </BrokenImage>
                  </Greeting>
                </Vulnerable>
                <Subtitle>More Information</Subtitle>
                <Links>
                  {links.map(url => <li key={url}><MoreLink href="#">{url}</MoreLink></li>)}
                </Links>
              </Main>
            </Columns>
            <Footer>
              <div>
                <div><b>Username:</b> admin</div>
                <div><b>Security Level:</b> high</div>
              </div>
              <SourceButtons>
                <SourceButton>View Source</SourceButton>
                <SourceButton>View Help</SourceButton>
              </SourceButtons>
            </Footer>
          </Container>
        </Page>
        <Scrollbar>
          <Icon w={8} h={6}><path d="M1 5l3-3.500L7 5" stroke="#404040" strokeWidth="2" /></Icon>
          <Thumb />
          <Icon w={8} h={6}><path d="M1 1l3 3.500L7 1" stroke="#404040" strokeWidth="2" /></Icon>
        </Scrollbar>
        <Shade>
          <Dialog role="alertdialog" aria-label="1">
            <DialogText>1</DialogText>
            <DialogActions><OkButton>确定</OkButton></DialogActions>
          </Dialog>
        </Shade>
      </Viewport>
    </Window>
  );
}
